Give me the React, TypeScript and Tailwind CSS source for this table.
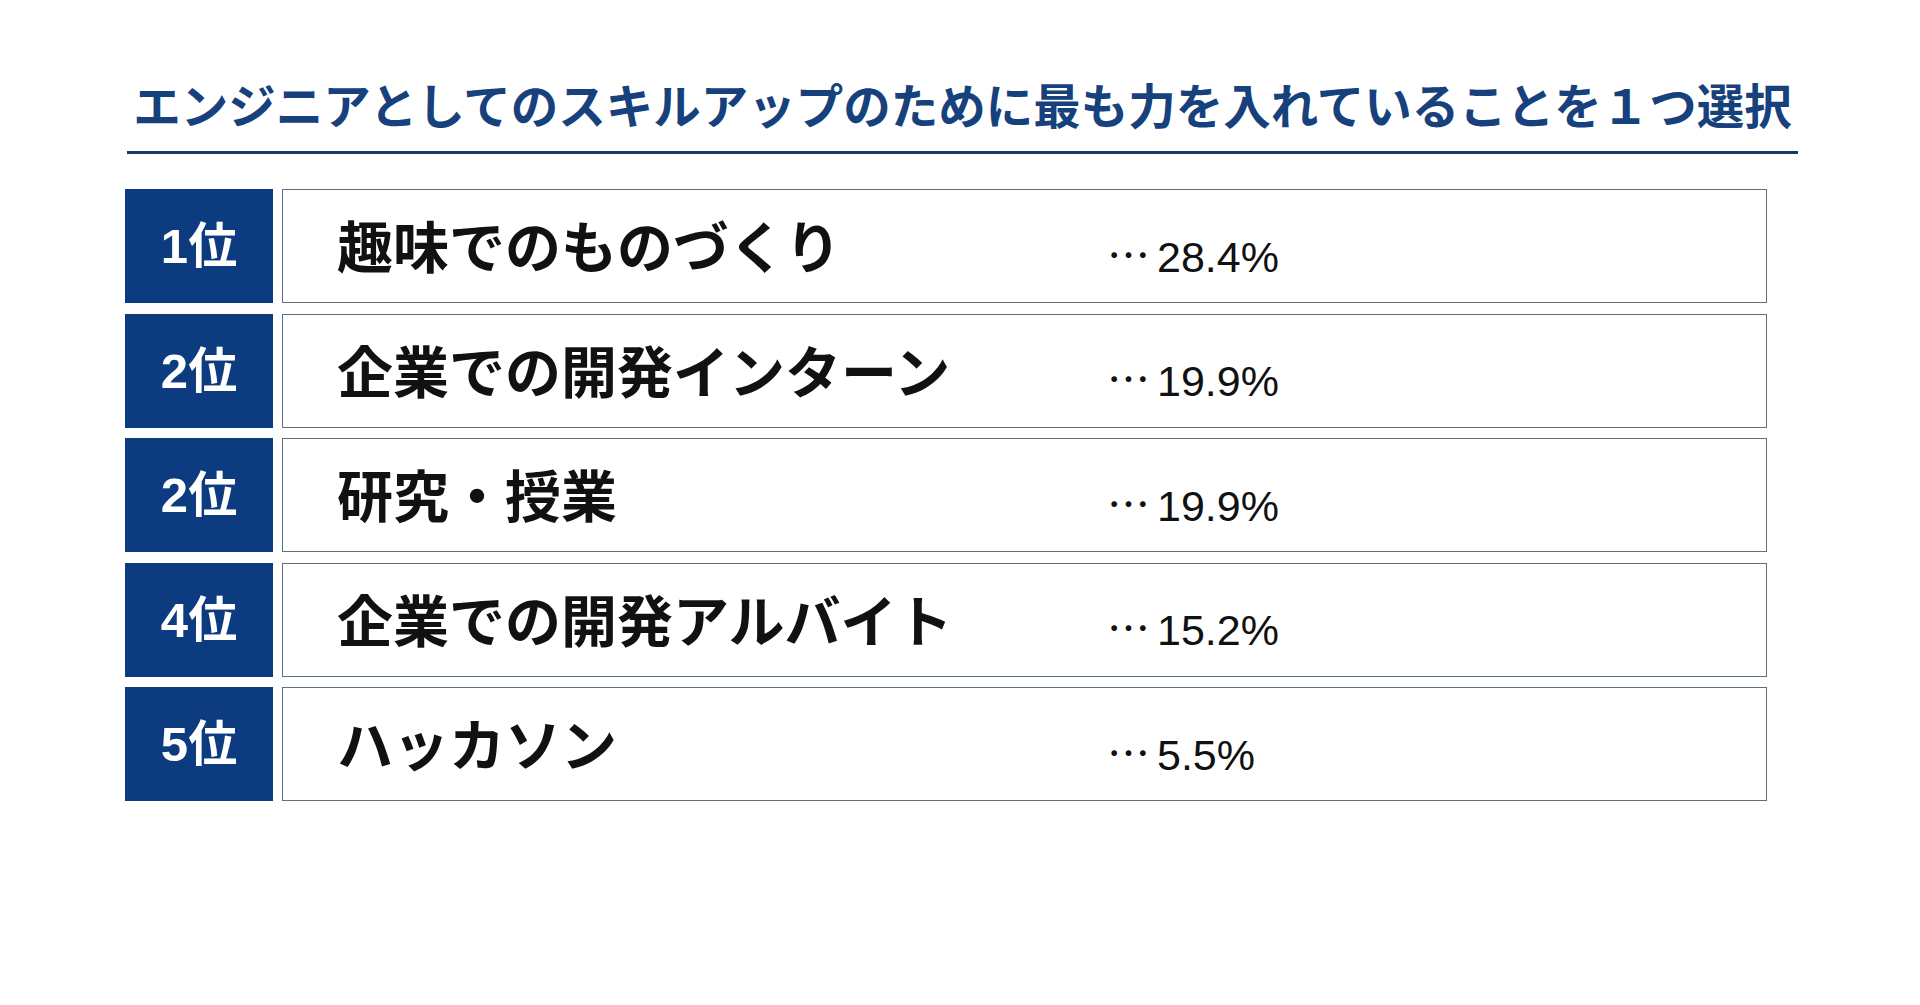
const rows = [
  { rank: "1", label: "趣味でのものづくり", value: "28.4%" },
  { rank: "2", label: "企業での開発インターン", value: "19.9%" },
  { rank: "2", label: "研究・授業", value: "19.9%" },
  { rank: "4", label: "企業での開発アルバイト", value: "15.2%" },
  { rank: "5", label: "ハッカソン", value: "5.5%" },
];

const jp = { fontFamily: '"Noto Sans CJK JP", "Noto Sans", sans-serif' };
const latin = { fontFamily: '"Liberation Sans", Arial, sans-serif' };

const App = () => {
  return (
    <div className="min-h-screen w-full bg-white" style={jp}>
      {/* title */}
      <div className="ml-[127px] w-[1671px] pt-[76px]">
        <h1 className="text-center text-[47.5px] font-bold leading-[56px] text-[#16417c]">
          エンジニアとしてのスキルアップのために最も力を入れていることを１つ選択
        </h1>
        <div className="mt-[19px] h-[3px] bg-[#123b6c]" />
      </div>

      {/* ranking */}
      <div className="ml-[125px] mt-[35px] flex flex-col gap-[10.5px]">
        {rows.map((r, i) => (
          <div key={i} className="flex h-[114px] gap-[9px]">
            <div className="flex w-[148px] items-baseline justify-center bg-[#0c3b7f] pt-[28px] text-[49px] font-bold leading-none text-white">
              <span style={latin}>{r.rank}</span>
              <span style={jp}>位</span>
            </div>
            <div className="flex w-[1485px] items-center border border-[#5f6f80] bg-white">
              <div className="w-[824px] pl-[54px] pb-[4px] text-[56px] font-bold leading-none text-[#111]">
                {r.label}
              </div>
              <div className="flex items-baseline pt-[18px] text-[43px] leading-none text-[#111]">
                <span className="w-[50px]" style={jp}>…</span>
                <span style={latin}>{r.value}</span>
              </div>
            </div>
          </div>
        ))}
      </div>
    </div>
  );
};

export default App;
